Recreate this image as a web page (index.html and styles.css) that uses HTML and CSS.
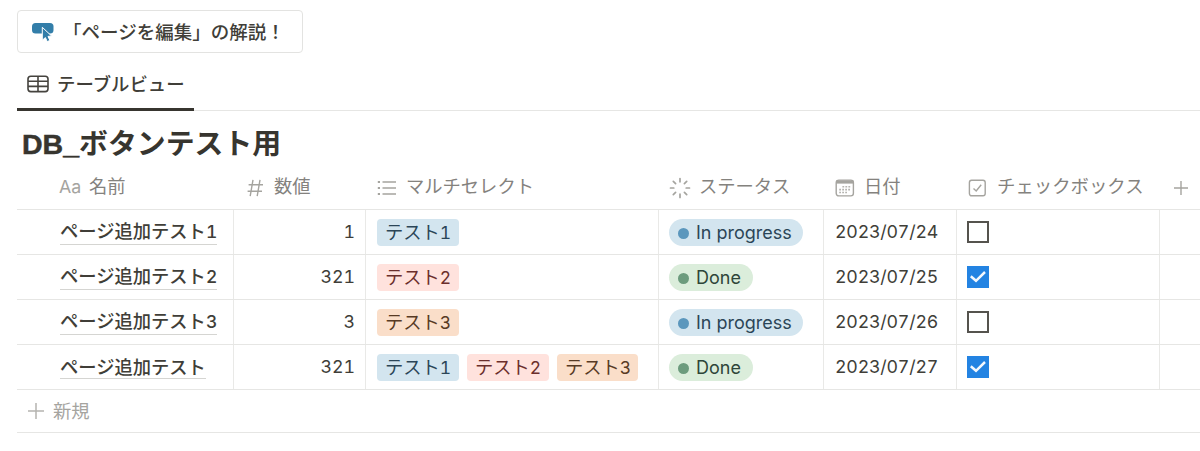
FILE: index.html
```html
<!DOCTYPE html>
<html lang="ja">
<head>
<meta charset="utf-8">
<title>DB_ボタンテスト用</title>
<link rel="stylesheet" href="styles.css">
</head>
<body>
<svg class="defs" width="0" height="0">
  <symbol id="check" viewBox="0 0 22 22"><path d="M3.8 10.2 L9 14.8 L18 6" fill="none" stroke="#f4f8fd" stroke-width="2.5"/></symbol>
</svg>
<main class="page">
  <button class="action">
    <svg class="action-icon" width="24" height="22" viewBox="0 0 24 22">
      <rect x="1" y="2" width="21.5" height="10.5" rx="3.5" fill="#337ea9"/>
      <path d="M11.3 6.3 L20.6 15 L17 15.4 L18.9 19.4 L16.2 20.6 L14.4 16.6 L11.3 19.2 Z" fill="#337ea9" stroke="#fff" stroke-width="1"/>
    </svg>
    <span>「ページを編集」の解説！</span>
  </button>

  <nav class="tabs">
    <div class="tab">
      <svg width="22" height="18" viewBox="0 0 22 18" fill="none" stroke="#45433e" stroke-width="1.6">
        <rect x="1" y="1.2" width="20" height="15.4" rx="2.8"/>
        <path d="M1 6.2H21M1 11.4H21M11 1.2V16.6"/>
      </svg>
      <span>テーブルビュー</span>
    </div>
  </nav>

  <h1 class="title"><span class="title-latin">DB_</span>ボタンテスト用</h1>

  <section class="table">
    <div class="row head">
      <div class="cell name"><span class="aa">Aa</span><span>名前</span></div>
      <div class="cell h-num">
        <svg width="17" height="18" viewBox="0 0 17 18" fill="none" stroke="#a5a49f" stroke-width="1.4"><path d="M6 .8L3.2 17.2M13 .8L10.2 17.2M1.6 5.7H16M.6 12.2H15"/></svg>
        <span>数値</span>
      </div>
      <div class="cell h-multi">
        <svg width="20" height="16" viewBox="0 0 20 16" fill="none" stroke="#a5a49f"><path stroke-width="1.4" d="M5.5 2H19M5.5 8H19M5.5 14H19"/><path stroke-width="2.2" d="M.8 2H3M.8 8H3M.8 14H3"/></svg>
        <span>マルチセレクト</span>
      </div>
      <div class="cell h-status">
        <svg width="22" height="22" viewBox="0 0 22 22" stroke="#a5a49f" stroke-width="1.7" stroke-linecap="round"><path d="M11 1.5V4.8M11 17.2V20.5M1.5 11H4.8M17.2 11H20.5M4.3 4.3L6.6 6.6M15.4 15.4L17.7 17.7M4.3 17.7L6.6 15.4M15.4 6.6L17.7 4.3"/></svg>
        <span>ステータス</span>
      </div>
      <div class="cell h-date">
        <svg width="20" height="18" viewBox="0 0 20 18"><rect x="1.2" y="1.1" width="17.2" height="15.8" rx="2.6" fill="none" stroke="#a5a49f" stroke-width="1.4"/><path d="M1.2 3H18.4" stroke="#a5a49f" stroke-width="3.2"/><path d="M7.4 7.7H15.5M4.2 10.6H15.5M4.2 13.5H12.5" stroke="#b5b4b0" stroke-width="1.6" stroke-dasharray="1.8 1.2"/></svg>
        <span>日付</span>
      </div>
      <div class="cell h-check">
        <svg width="19" height="18" viewBox="0 0 19 18" fill="none" stroke="#a5a49f" stroke-width="1.4"><rect x="1.4" y="1.2" width="15.8" height="15.6" rx="2.2"/><path d="M5.5 9.5L8.2 12L13.2 5.8"/></svg>
        <span>チェックボックス</span>
      </div>
      <div class="cell h-add"><svg width="14" height="14" viewBox="0 0 14 14" stroke="#a5a49f" stroke-width="1.4"><path d="M7 0V14M0 7H14"/></svg></div>
    </div>

    <div class="row">
      <div class="cell name"><span class="link">ページ追加テスト<i>1</i></span></div>
      <div class="cell num">1</div>
      <div class="cell tags"><span class="tag blue">テスト<i>1</i></span></div>
      <div class="cell status"><span class="pill progress">In progress</span></div>
      <div class="cell date">2023/07/24</div>
      <div class="cell check"><span class="box"></span></div>
      <div class="cell last"></div>
    </div>
    <div class="row">
      <div class="cell name"><span class="link">ページ追加テスト<i>2</i></span></div>
      <div class="cell num">321</div>
      <div class="cell tags"><span class="tag red">テスト<i>2</i></span></div>
      <div class="cell status"><span class="pill done">Done</span></div>
      <div class="cell date">2023/07/25</div>
      <div class="cell check"><svg class="box on"><use href="#check"/></svg></div>
      <div class="cell last"></div>
    </div>
    <div class="row">
      <div class="cell name"><span class="link">ページ追加テスト<i>3</i></span></div>
      <div class="cell num">3</div>
      <div class="cell tags"><span class="tag orange">テスト<i>3</i></span></div>
      <div class="cell status"><span class="pill progress">In progress</span></div>
      <div class="cell date">2023/07/26</div>
      <div class="cell check"><span class="box"></span></div>
      <div class="cell last"></div>
    </div>
    <div class="row">
      <div class="cell name"><span class="link">ページ追加テスト</span></div>
      <div class="cell num">321</div>
      <div class="cell tags"><span class="tag blue">テスト<i>1</i></span><span class="tag red">テスト<i>2</i></span><span class="tag orange">テスト<i>3</i></span></div>
      <div class="cell status"><span class="pill done">Done</span></div>
      <div class="cell date">2023/07/27</div>
      <div class="cell check"><svg class="box on"><use href="#check"/></svg></div>
      <div class="cell last"></div>
    </div>
    <div class="new-row">
      <svg width="16" height="16" viewBox="0 0 16 16" stroke="#b5b4b0" stroke-width="1.5"><path d="M8 0V16M0 8H16"/></svg>
      <span>新規</span>
    </div>
  </section>
</main>
</body>
</html>
```
FILE: styles.css
```css
* { box-sizing: border-box; }
body {
  margin: 0;
  background: #fff;
  color: #403e38;
  font: 18.3px/24px "Noto Sans CJK JP", sans-serif;
  overflow: hidden;
}
svg { display: block; flex: none; }
i { font-style: normal; font-family: Inter, sans-serif; font-size: 17.5px; font-variant-numeric: tabular-nums; }
.defs { position: absolute; }
.page { padding: 10px 0 0 17px; white-space: nowrap; }

.action {
  display: flex;
  align-items: center;
  width: 286px;
  height: 43px;
  padding: 0 0 2px 13px;
  border: 1px solid #e3e3e1;
  border-radius: 4px;
  background: #fff;
  color: inherit;
  font: inherit;
  font-size: 18.5px;
  font-weight: 500;
}
.action-icon { margin: 3px 8px 0 0; }

.tabs {
  display: flex;
  height: 58px;
  border-bottom: 1px solid #e6e6e4;
}
.tab {
  display: flex;
  align-items: center;
  gap: 8px;
  width: 177px;
  height: 58px;
  padding: 5px 0 0 10px;
  border-bottom: 3px solid #37352f;
  font-size: 18.4px;
  font-weight: 500;
}
.tab svg { margin-top: 2px; }

.title {
  margin: 0;
  height: 55px;
  padding: 10px 0 0 5px;
  color: #37352f;
  font-size: 28.9px;
  line-height: 40px;
  font-weight: 700;
}
.title-latin {
  font-family: "Liberation Sans", Arial, sans-serif;
  font-size: 28.5px;
  -webkit-text-stroke: .5px #37352f;
}

.row {
  display: grid;
  grid-template-columns: 217px 132px 293px 165px 133px 203px 1fr;
  height: 45px;
  border-bottom: 1px solid #e6e6e4;
}
.cell {
  display: flex;
  align-items: center;
  border-right: 1px solid #e9e9e7;
}
.cell.last { border: 0; }
.cell.name { padding: 0 0 2px 43px; }
.head { height: 44px; color: #84827e; }
.head .cell { border: 0; padding-bottom: 5px; }
.head .cell.name { padding: 0 0 5px 42px; }
.head svg { margin-top: 5px; }
.aa { width: 30px; font-family: Inter, sans-serif; font-size: 17.8px; color: #a5a49f; padding-top: 4px; }
.h-num { padding-left: 13px; gap: 10px; }
.h-multi { padding-left: 11px; gap: 9px; }
.h-status { padding-left: 10px; gap: 8px; }
.h-date { padding-left: 11px; gap: 9px; }
.h-check { padding-left: 11px; gap: 10px; font-size: 18.4px; }
.h-add { padding-left: 14px; }

.link { font-weight: 500; border-bottom: 1px solid #d5d5d2; }
.num, .date {
  font-family: Inter, sans-serif;
  font-size: 17.8px;
  font-variant-numeric: tabular-nums;
}
.num { justify-content: flex-end; padding-right: 10px; }
.date { padding-left: 11px; letter-spacing: -.2px; }
.tags { padding: 1px 0 0 11px; gap: 8px; }
.tag {
  width: 82px;
  height: 27px;
  padding-left: 8px;
  border-radius: 4px;
  line-height: 25px;
}
.tag:nth-child(3) { width: 81px; }
.blue { background: #d3e5ef; color: #2b4557; }
.red { background: #ffe2dd; color: #6b2e2b; }
.orange { background: #fadec9; color: #573a24; }
.status { padding: 1px 0 0 10px; }
.pill {
  display: flex;
  align-items: center;
  gap: 7px;
  height: 27px;
  padding: 0 0 0 9px;
  border-radius: 14px;
  font-family: Inter, sans-serif;
  font-size: 18px;
}
.pill::before { content: ""; flex: none; width: 11px; height: 11px; border-radius: 50%; margin-top: 2px; }
.progress { background: #d3e5ef; color: #2b4557; width: 134px; }
.progress::before { background: #5b97bd; }
.done { background: #dbeddb; color: #2e4539; width: 84px; }
.done::before { background: #6c9b7d; }
.check { padding-left: 10px; }
.box { width: 22px; height: 22px; border: 2px solid #55534e; }
.box.on { border: 0; background: #2383e2; }
.new-row {
  display: flex;
  align-items: center;
  gap: 9px;
  height: 43px;
  padding: 0 0 1px 11px;
  border-bottom: 1px solid #e6e6e4;
  color: #a5a49f;
}
.new-row span { margin-bottom: 1px; }
```
